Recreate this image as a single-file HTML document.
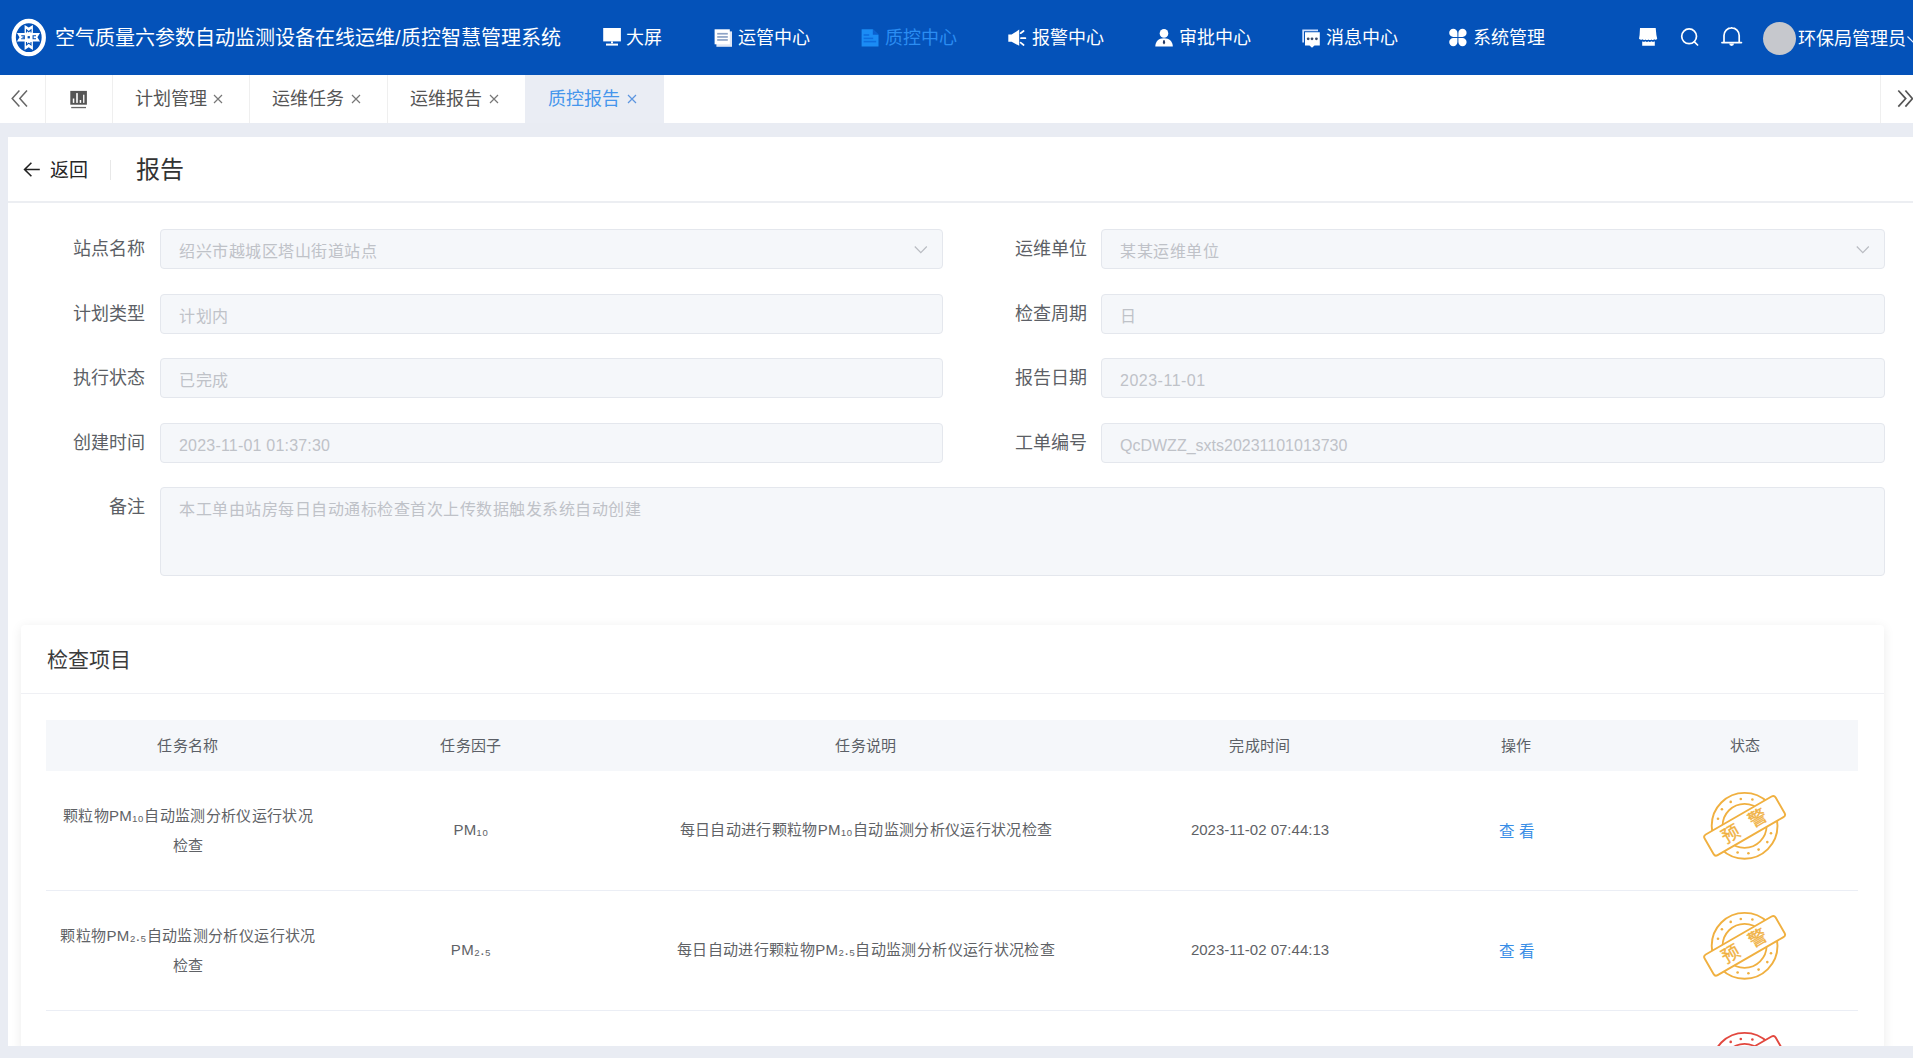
<!DOCTYPE html>
<html lang="zh-CN">
<head>
<meta charset="utf-8">
<style>
*{margin:0;padding:0;box-sizing:border-box;}
html,body{width:1913px;height:1058px;overflow:hidden;background:#e9ecf3;font-family:"Liberation Sans",sans-serif;}
.a{position:absolute;white-space:nowrap;line-height:1;}
#hdr{position:absolute;left:0;top:0;width:1913px;height:75px;background:#0452b9;}
.nv{position:absolute;top:29px;font-size:18px;color:#fff;white-space:nowrap;line-height:1;}
#tabs{position:absolute;left:0;top:75px;width:1913px;height:48px;background:#fff;}
.sep{position:absolute;top:75px;width:1px;height:48px;background:#efefef;}
.tab{position:absolute;top:90px;font-size:18px;color:#555;white-space:nowrap;line-height:1;}
.x{position:absolute;top:94px;width:10px;height:10px;}
#card{position:absolute;left:8px;top:137px;width:1905px;height:909px;background:#fff;}
.lbl{position:absolute;font-size:18px;color:#5c5f66;white-space:nowrap;line-height:1;}
.inp{position:absolute;height:40px;background:#f5f7fa;border:1px solid #e4e7ed;border-radius:4px;}
.inp span{position:absolute;left:18px;top:14px;font-size:16px;letter-spacing:0.5px;color:#bfc2c8;white-space:nowrap;line-height:1;}
#sec{position:absolute;left:21px;top:625px;width:1863px;height:430px;background:#fff;box-shadow:0 2px 12px 0 rgba(0,0,0,0.08);border-radius:4px;}
.th{position:absolute;top:738px;font-size:15px;letter-spacing:0.35px;color:#5b5f66;text-align:center;white-space:nowrap;line-height:1;}
.td{position:absolute;font-size:15px;letter-spacing:0.35px;color:#606266;text-align:center;white-space:nowrap;line-height:1;}
.lnk{position:absolute;font-size:15.5px;color:#3a8ee6;white-space:nowrap;line-height:1;letter-spacing:4px;}
#bottom{position:absolute;left:0;top:1046px;width:1913px;height:12px;background:#e9ecf3;}
</style>
</head>
<body>
<svg width="0" height="0" style="position:absolute">
  <defs>
    <g id="stamp">
      <circle cx="49.6" cy="40.8" r="32.9" fill="none" stroke="currentColor" stroke-width="1.9"/>
      <circle cx="49.6" cy="40.8" r="22" fill="none" stroke="currentColor" stroke-width="1.8"/>
      <g fill="currentColor">
        <circle cx="76" cy="48.2" r="1.3"/><circle cx="72.3" cy="57.1" r="1.3"/><circle cx="63.6" cy="64.6" r="1.3"/>
        <circle cx="53.4" cy="68.3" r="1.3"/><circle cx="42.6" cy="67.5" r="1.3"/>
        <circle cx="45.8" cy="14" r="1.3"/><circle cx="57.4" cy="14.5" r="1.3"/><circle cx="35.7" cy="16.9" r="1.3"/>
        <circle cx="26.9" cy="24.2" r="1.3"/><circle cx="23" cy="33.8" r="1.3"/>
      </g>
      <g transform="translate(49.6 40.8) rotate(-30)">
        <rect x="-41" y="-11.9" width="82" height="23.8" rx="3" fill="#fff" stroke="currentColor" stroke-width="1.9"/>
      </g>
    </g>
  </defs>
</svg>

<div id="hdr"></div>
<!-- logo -->
<svg class="a" style="left:10px;top:18px" width="38" height="40" viewBox="0 0 38 40">
  <ellipse cx="18.75" cy="19.6" rx="15.05" ry="16.6" fill="none" stroke="#fff" stroke-width="4.3"/>
  <path d="M14.6 6.9 L18.75 9.6 L22.9 6.9 V15 H30 L27.4 19.2 L30 23.4 H22.9 V31.9 L18.75 29.2 L14.6 31.9 V23.4 H6.9 L9.5 19.2 L6.9 15 H14.6 Z" fill="#fff"/>
  <g fill="none" stroke="#0452b9" stroke-width="1.1">
    <path d="M16.5 14.6 V11.9 L18.75 13.7 L21 11.9 V14.6"/>
    <path d="M16.5 24 V26.9 L18.75 25.1 L21 26.9 V24"/>
    <path d="M11.2 17.7 H14.3 V20.8 H11.2 M12.4 19.25 H14.3"/>
    <path d="M26 17.7 H23.1 V20.8 H26"/>
  </g>
  <rect x="17.6" y="18.1" width="2.3" height="2.3" fill="#0452b9"/>
</svg>
<div class="a" style="left:55px;top:28px;font-size:20px;color:#fff;">空气质量六参数自动监测设备在线运维/质控智慧管理系统</div>

<!-- nav icons -->
<svg class="a" style="left:603px;top:27px" width="19" height="20" viewBox="0 0 19 20">
  <rect x="0.2" y="1" width="17.7" height="13.4" fill="#fff"/>
  <rect x="8" y="14.4" width="2" height="2" fill="#fff"/>
  <rect x="3" y="16.6" width="12" height="2" fill="#fff"/>
</svg>
<div class="nv" style="left:626px;">大屏</div>

<svg class="a" style="left:714px;top:29px" width="19" height="19" viewBox="0 0 19 19">
  <rect x="2.4" y="2.4" width="15.6" height="15.4" fill="#dfe7f5"/>
  <rect x="0.6" y="0.3" width="15.2" height="15" fill="#fff"/>
  <rect x="3.2" y="3.9" width="10.6" height="1.7" fill="#8da3c6"/>
  <rect x="3.2" y="7.1" width="10.6" height="1.7" fill="#8da3c6"/>
  <rect x="3.2" y="10.1" width="10.6" height="1.7" fill="#8da3c6"/>
</svg>
<div class="nv" style="left:738px;">运管中心</div>

<svg class="a" style="left:861px;top:29px" width="19" height="19" viewBox="0 0 19 19">
  <path d="M0.6 0.3 H11.8 L17.5 5.8 V17.6 H0.6 Z" fill="#1b8cf5"/>
  <path d="M11.8 0.3 V5.8 H17.5 Z" fill="#0b5fcf"/>
  <rect x="2.6" y="5.2" width="5.6" height="1.6" fill="#0d6ee0"/>
  <rect x="2.6" y="8.6" width="9.6" height="1.6" fill="#0d6ee0"/>
  <rect x="2.6" y="11.8" width="12.6" height="1.6" fill="#0d6ee0"/>
</svg>
<div class="nv" style="left:885px;color:#2b8df2;">质控中心</div>

<svg class="a" style="left:1008px;top:29px" width="19" height="18" viewBox="0 0 19 18">
  <path d="M0.3 5.6 H3.6 L11.2 0.6 V16.8 L3.6 12.8 H0.3 Z" fill="#fff"/>
  <path d="M12.6 4.2 L15.6 2" stroke="#fff" stroke-width="1.7" stroke-linecap="round"/>
  <path d="M13 9.2 H17.4" stroke="#fff" stroke-width="1.7" stroke-linecap="round"/>
  <path d="M12.6 13.6 L15.6 16" stroke="#fff" stroke-width="1.7" stroke-linecap="round"/>
</svg>
<div class="nv" style="left:1032px;">报警中心</div>

<svg class="a" style="left:1155px;top:28px" width="19" height="19" viewBox="0 0 19 19">
  <circle cx="9" cy="5.4" r="4.3" fill="#fff"/>
  <path d="M0.3 18.5 C0.3 13.5 3.5 10.2 9 10.2 C14.5 10.2 17.8 13.5 17.8 18.5 Z" fill="#fff"/>
  <path d="M8.2 12.2 H9.8 L10.2 15 L9 16.5 L7.8 15 Z" fill="#243a66"/>
</svg>
<div class="nv" style="left:1179px;">审批中心</div>

<svg class="a" style="left:1302px;top:29px" width="19" height="20" viewBox="0 0 19 20">
  <path d="M0.3 13.5 V0.6 H16 V2.3 H2 V13.5 Z" fill="#cfe0ff"/>
  <path d="M3 3.2 H17.8 V16.5 H12.5 L10 18.8 L7.5 16.5 H3 Z" fill="#fff"/>
  <circle cx="6.2" cy="9.8" r="1.4" fill="#3a4a6a"/>
  <circle cx="10" cy="9.8" r="1.4" fill="#3a4a6a"/>
  <circle cx="14.4" cy="9.8" r="1.4" fill="#3a4a6a"/>
</svg>
<div class="nv" style="left:1326px;">消息中心</div>

<svg class="a" style="left:1449px;top:28px" width="19" height="19" viewBox="0 0 19 19">
  <path d="M8.4 9 H4.4 A4.1 4.1 0 1 1 8.4 4.9 Z" fill="#fff"/>
  <path d="M9.4 9 H13.4 A4.1 4.1 0 1 0 9.4 4.9 Z" fill="#fff"/>
  <path d="M8.4 10 H4.4 A4.1 4.1 0 1 0 8.4 14.1 Z" fill="#fff"/>
  <path d="M9.4 10 H13.4 A4.1 4.1 0 1 1 9.4 14.1 Z" fill="#fff"/>
</svg>
<div class="nv" style="left:1473px;">系统管理</div>

<!-- right icons -->
<svg class="a" style="left:1638px;top:27px" width="20" height="20" viewBox="0 0 20 20">
  <path d="M2 0.9 H17.7 L18.4 8 L19.2 11.8 C18.6 12.9 17.3 13.2 16.4 12.3 C15.6 13.3 14.2 13.3 13.4 12.4 C12.6 13.3 11.2 13.3 10.4 12.4 C9.6 13.3 8.2 13.3 7.4 12.4 C6.6 13.3 5.2 13.3 4.4 12.3 C3.5 13.2 2.1 12.9 1 11.8 L1.6 8 Z" fill="#fff"/>
  <path d="M4.2 14.3 C5.4 15.1 6.2 14.9 7.4 14.2 C8.6 15.1 9.4 15.1 10.4 14.2 C11.4 15.1 12.2 15.1 13.4 14.2 C14.6 14.9 15.4 15.1 16.8 14.3 V18.7 H4.2 Z" fill="#fff"/>
</svg>
<svg class="a" style="left:1679px;top:26px" width="21" height="21" viewBox="0 0 21 21">
  <circle cx="10.1" cy="10.3" r="7.4" fill="none" stroke="#fff" stroke-width="1.7"/>
  <path d="M15.4 15.8 L18.6 19" stroke="#fff" stroke-width="1.7" stroke-linecap="round"/>
</svg>
<svg class="a" style="left:1721px;top:26px" width="22" height="22" viewBox="0 0 22 22">
  <path d="M10.6 1 V2.2 M3 16.2 V9.4 A7.6 7.6 0 0 1 18.2 9.4 V16.2" fill="none" stroke="#fff" stroke-width="1.7"/>
  <path d="M1 16.6 H20.4" stroke="#fff" stroke-width="1.8" stroke-linecap="round"/>
  <path d="M8.2 17.6 A2.4 2.4 0 0 0 13 17.6 Z" fill="#fff"/>
</svg>
<div class="a" style="left:1763px;top:22px;width:33px;height:33px;border-radius:50%;background:#c6c8cd;"></div>
<div class="a" style="left:1798px;top:30px;font-size:18px;color:#fff;">环保局管理员</div>
<svg class="a" style="left:1907px;top:35px" width="14" height="10" viewBox="0 0 14 10">
  <path d="M0.5 1.5 L6.5 7.5 L12.5 1.5" fill="none" stroke="#e6eeff" stroke-width="1.2"/>
</svg>

<!-- tab bar -->
<div id="tabs"></div>
<div class="a" style="left:525px;top:75px;width:139px;height:48px;background:#eaedf4;"></div>
<div class="sep" style="left:45px"></div>
<div class="sep" style="left:112px"></div>
<div class="sep" style="left:249px"></div>
<div class="sep" style="left:387px"></div>
<div class="sep" style="left:1880px"></div>
<svg class="a" style="left:10px;top:89px" width="20" height="19" viewBox="0 0 20 19">
  <path d="M9.4 1.6 L2.2 9.5 L9.4 17.6 M17 1.6 L9.8 9.5 L17 17.6" fill="none" stroke="#666" stroke-width="1.5"/>
</svg>
<svg class="a" style="left:70px;top:90px" width="18" height="19" viewBox="0 0 18 19">
  <rect x="0.3" y="0.9" width="16.6" height="13.8" fill="#555"/>
  <rect x="2.8" y="8.5" width="1.5" height="4.4" fill="#fff"/>
  <rect x="6.2" y="3.1" width="1.6" height="9.8" fill="#fff"/>
  <rect x="9.7" y="10" width="1.5" height="2.9" fill="#fff"/>
  <rect x="13.1" y="4.7" width="1.3" height="8.2" fill="#fff"/>
  <rect x="1.2" y="16.9" width="14.8" height="1.3" fill="#666"/>
</svg>
<svg class="a" style="left:1895px;top:89px" width="18" height="19" viewBox="0 0 18 19">
  <path d="M3.3 1.5 L10.7 9.6 L3.3 17.6 M10.4 1.5 L17.5 9.6 L10.4 17.6" fill="none" stroke="#555" stroke-width="1.7"/>
</svg>

<div class="tab" style="left:135px">计划管理</div>
<svg class="x" style="left:213px" viewBox="0 0 10 10"><path d="M1 1 L9 9 M9 1 L1 9" stroke="#777" stroke-width="1.2"/></svg>
<div class="tab" style="left:272px">运维任务</div>
<svg class="x" style="left:351px" viewBox="0 0 10 10"><path d="M1 1 L9 9 M9 1 L1 9" stroke="#777" stroke-width="1.2"/></svg>
<div class="tab" style="left:410px">运维报告</div>
<svg class="x" style="left:489px" viewBox="0 0 10 10"><path d="M1 1 L9 9 M9 1 L1 9" stroke="#777" stroke-width="1.2"/></svg>
<div class="tab" style="left:548px;color:#4596ec">质控报告</div>
<svg class="x" style="left:627px" viewBox="0 0 10 10"><path d="M1 1 L9 9 M9 1 L1 9" stroke="#5b95e0" stroke-width="1.2"/></svg>

<!-- main card -->
<div id="card"></div>
<svg class="a" style="left:23px;top:161px" width="18" height="17" viewBox="0 0 18 17">
  <path d="M16.8 8.5 H2 M8.4 1.8 L1.6 8.5 L8.4 15.2" fill="none" stroke="#222" stroke-width="1.6"/>
</svg>
<div class="a" style="left:50px;top:161px;font-size:19px;color:#262626;">返回</div>
<div class="a" style="left:110px;top:160px;width:1px;height:20px;background:#e8e8e8;"></div>
<div class="a" style="left:136px;top:158px;font-size:24px;color:#333;">报告</div>
<div class="a" style="left:8px;top:201px;width:1905px;height:2px;background:#eceef2;"></div>

<div class="lbl" style="left:73px;top:240px">站点名称</div>
<div class="inp" style="left:160px;top:229px;width:783px"><span>绍兴市越城区塔山街道站点</span></div>
<svg class="a" style="left:914px;top:245px" width="14" height="9" viewBox="0 0 14 9"><path d="M0.8 1.5 L6.8 7.6 L12.8 1.5" fill="none" stroke="#b9bcc2" stroke-width="1.2"/></svg>
<div class="lbl" style="left:1015px;top:240px">运维单位</div>
<div class="inp" style="left:1101px;top:229px;width:784px"><span>某某运维单位</span></div>
<svg class="a" style="left:1856px;top:245px" width="14" height="9" viewBox="0 0 14 9"><path d="M0.8 1.5 L6.8 7.6 L12.8 1.5" fill="none" stroke="#b9bcc2" stroke-width="1.2"/></svg>

<div class="lbl" style="left:73px;top:305px">计划类型</div>
<div class="inp" style="left:160px;top:294px;width:783px"><span>计划内</span></div>
<div class="lbl" style="left:1015px;top:305px">检查周期</div>
<div class="inp" style="left:1101px;top:294px;width:784px"><span>日</span></div>

<div class="lbl" style="left:73px;top:369px">执行状态</div>
<div class="inp" style="left:160px;top:358px;width:783px"><span>已完成</span></div>
<div class="lbl" style="left:1015px;top:369px">报告日期</div>
<div class="inp" style="left:1101px;top:358px;width:784px"><span>2023-11-01</span></div>

<div class="lbl" style="left:73px;top:434px">创建时间</div>
<div class="inp" style="left:160px;top:423px;width:783px"><span style="letter-spacing:0.2px">2023-11-01 01:37:30</span></div>
<div class="lbl" style="left:1015px;top:434px">工单编号</div>
<div class="inp" style="left:1101px;top:423px;width:784px"><span style="letter-spacing:0">QcDWZZ_sxts20231101013730</span></div>

<div class="lbl" style="left:109px;top:498px">备注</div>
<div class="inp" style="left:160px;top:487px;width:1725px;height:89px"><span style="top:14px">本工单由站房每日自动通标检查首次上传数据触发系统自动创建</span></div>

<!-- section -->
<div id="sec"></div>
<div class="a" style="left:47px;top:649px;font-size:21px;color:#3c3c3c;">检查项目</div>
<div class="a" style="left:21px;top:693px;width:1863px;height:1px;background:#eff0f4;"></div>

<div class="a" style="left:46px;top:720px;width:1812px;height:51px;background:#f5f7fa;"></div>
<div class="th" style="left:46px;width:284px">任务名称</div>
<div class="th" style="left:330px;width:282px">任务因子</div>
<div class="th" style="left:612px;width:508px">任务说明</div>
<div class="th" style="left:1120px;width:280px">完成时间</div>
<div class="th" style="left:1400px;width:232px">操作</div>
<div class="th" style="left:1632px;width:226px">状态</div>

<!-- row 1 -->
<div class="td" style="left:46px;top:808px;width:284px;line-height:30px;white-space:normal;top:801px">颗粒物PM₁₀自动监测分析仪运行状况<br>检查</div>
<div class="td" style="left:330px;top:822px;width:282px">PM₁₀</div>
<div class="td" style="left:612px;top:822px;width:508px">每日自动进行颗粒物PM₁₀自动监测分析仪运行状况检查</div>
<div class="td" style="left:1120px;top:822px;width:280px;letter-spacing:0">2023-11-02 07:44:13</div>
<div class="lnk" style="left:1499px;top:824px;">查看</div>
<svg class="a" style="left:1695px;top:785px;color:#f0b040" width="100" height="85" viewBox="0 0 100 85">
  <use href="#stamp"/>
  <text x="0" y="0" transform="translate(35.6 49.2) rotate(-30)" font-size="18" fill="currentColor" stroke="currentColor" stroke-width="0.35" text-anchor="middle" dominant-baseline="central">预</text>
  <text x="0" y="0" transform="translate(62.8 33.4) rotate(-30)" font-size="18" fill="currentColor" stroke="currentColor" stroke-width="0.35" text-anchor="middle" dominant-baseline="central">警</text>
</svg>
<div class="a" style="left:46px;top:890px;width:1812px;height:1px;background:#ebeef5;"></div>

<!-- row 2 -->
<div class="td" style="left:46px;width:284px;line-height:30px;white-space:normal;top:921px">颗粒物PM₂.₅自动监测分析仪运行状况<br>检查</div>
<div class="td" style="left:330px;top:942px;width:282px">PM₂.₅</div>
<div class="td" style="left:612px;top:942px;width:508px">每日自动进行颗粒物PM₂.₅自动监测分析仪运行状况检查</div>
<div class="td" style="left:1120px;top:942px;width:280px;letter-spacing:0">2023-11-02 07:44:13</div>
<div class="lnk" style="left:1499px;top:944px;">查看</div>
<svg class="a" style="left:1695px;top:905px;color:#f0b040" width="100" height="85" viewBox="0 0 100 85">
  <use href="#stamp"/>
  <text x="0" y="0" transform="translate(35.6 49.2) rotate(-30)" font-size="18" fill="currentColor" stroke="currentColor" stroke-width="0.35" text-anchor="middle" dominant-baseline="central">预</text>
  <text x="0" y="0" transform="translate(62.8 33.4) rotate(-30)" font-size="18" fill="currentColor" stroke="currentColor" stroke-width="0.35" text-anchor="middle" dominant-baseline="central">警</text>
</svg>
<div class="a" style="left:46px;top:1010px;width:1812px;height:1px;background:#ebeef5;"></div>

<!-- row 3 (clipped) -->
<svg class="a" style="left:1695px;top:1025px;color:#e2483f" width="100" height="85" viewBox="0 0 100 85">
  <use href="#stamp"/>
</svg>

<div id="bottom"></div>
</body>
</html>
